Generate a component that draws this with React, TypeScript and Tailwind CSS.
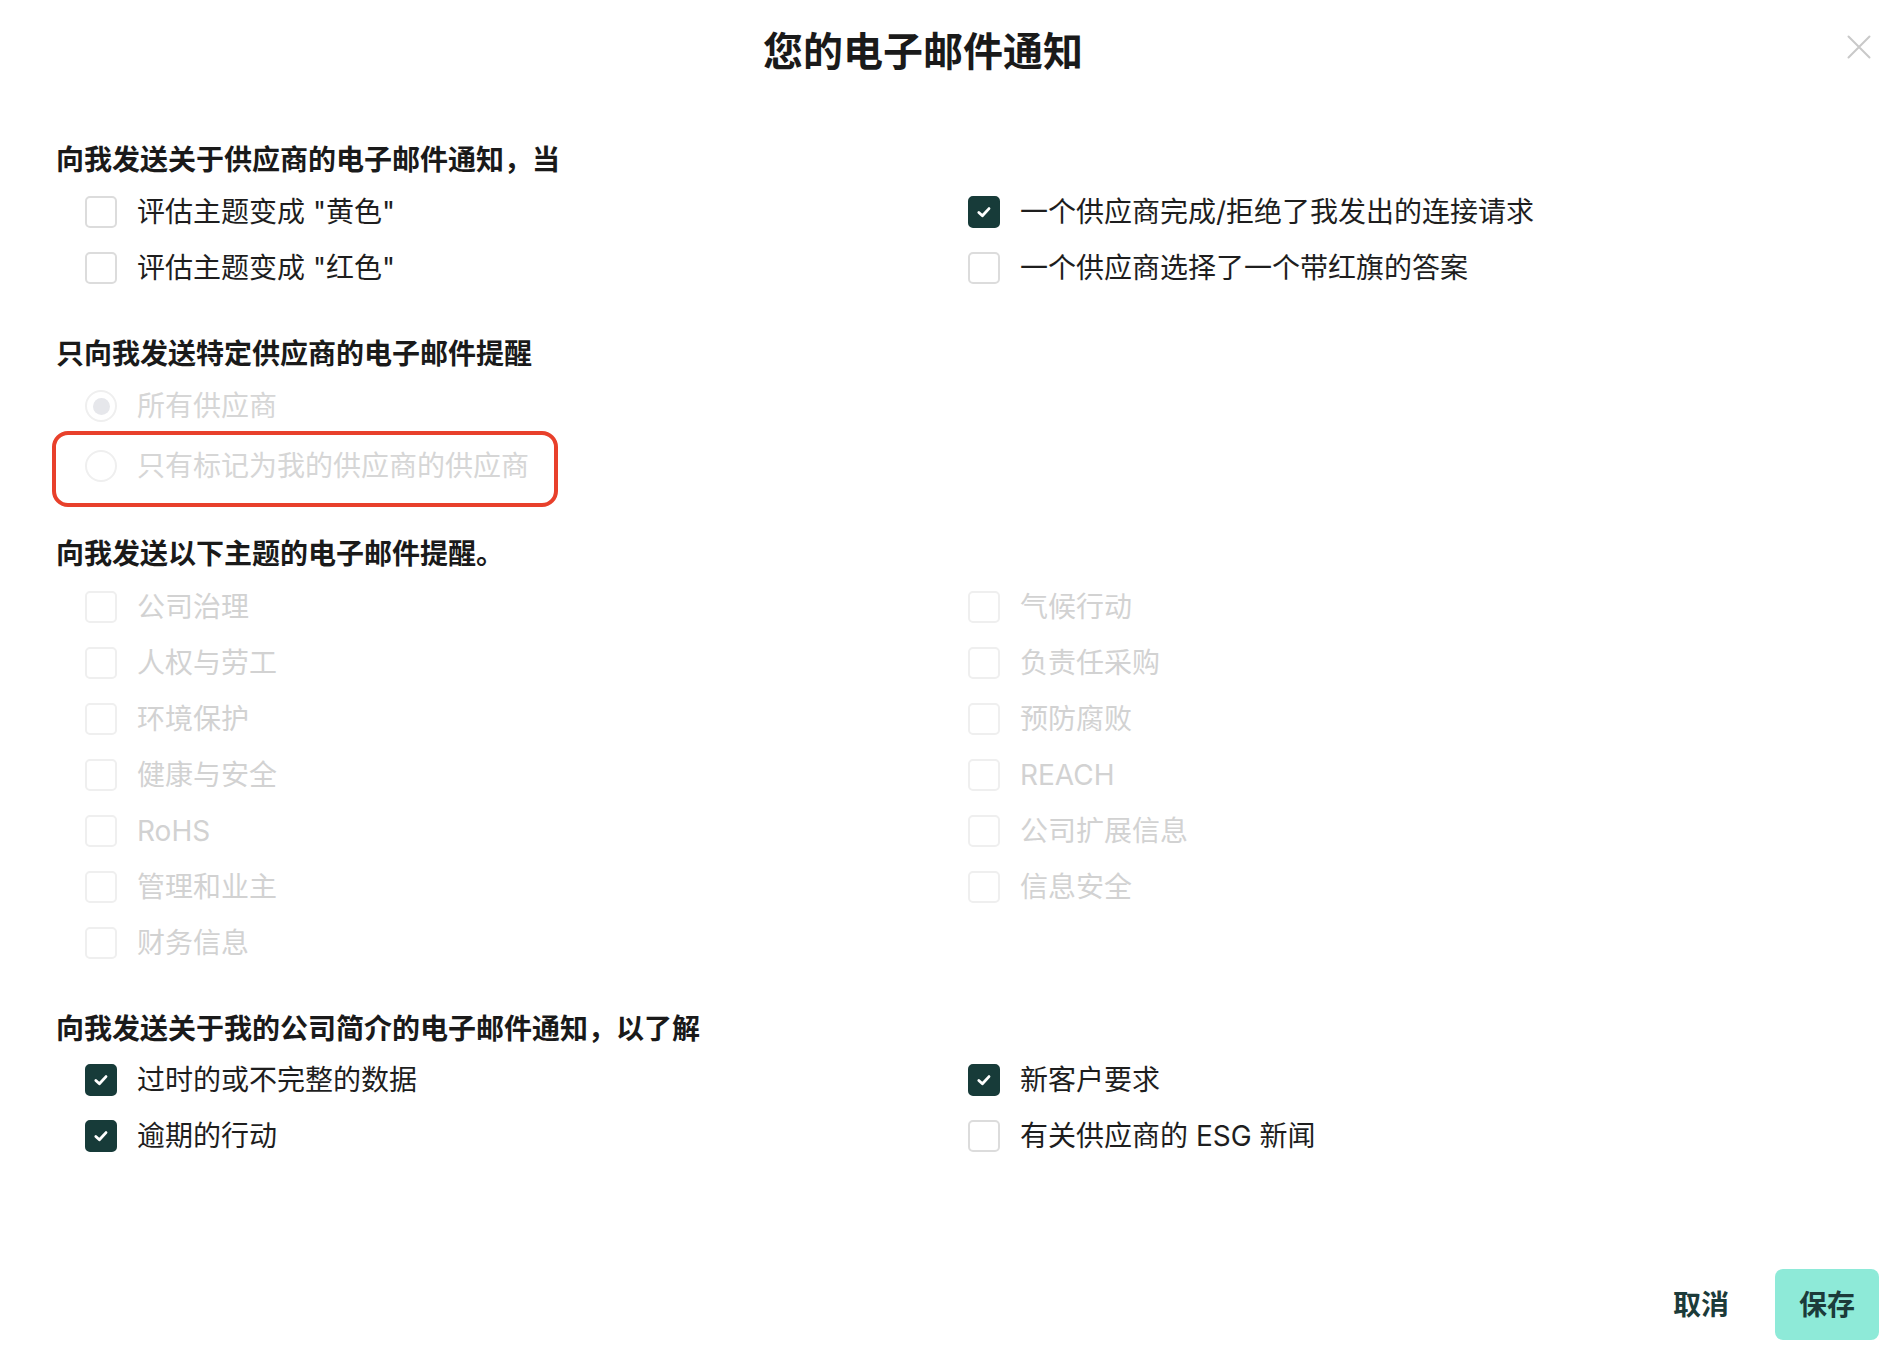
import React from "react";

type Item = { label: string; checked?: boolean; disabled?: boolean };

function CheckIcon() {
  return (
    <svg width="20" height="20" viewBox="0 0 20 20" fill="none">
      <path d="M4.8 10.4 L8.4 13.8 L15 6.6" stroke="#ffffff" strokeWidth="2.8" strokeLinecap="round" strokeLinejoin="round" />
    </svg>
  );
}

function CheckRow({ item }: { item: Item }) {
  const box = item.checked
    ? "bg-[#173b39] border-2 border-[#173b39]"
    : item.disabled
    ? "bg-white border-2 border-[#efefef]"
    : "bg-white border-2 border-[#dcdcdc]";
  return (
    <div className="flex h-[56px] items-center gap-[20px]">
      <div className={`flex h-[32px] w-[32px] shrink-0 items-center justify-center rounded-[5px] ${box}`}>
        {item.checked ? <CheckIcon /> : null}
      </div>
      <span
        className={`whitespace-nowrap text-[28px] leading-[36px] ${
          item.disabled ? "text-[#d2d2d2]" : "text-[#1e1e1e]"
        }`}
      >
        {item.label}
      </span>
    </div>
  );
}

function Grid({ items }: { items: Item[] }) {
  return (
    <div className="ml-[29px] grid grid-cols-[883px_1fr]">
      {items.map((it, i) => (
        <CheckRow key={i} item={it} />
      ))}
    </div>
  );
}

function Heading({ children, className = "" }: { children: React.ReactNode; className?: string }) {
  return (
    <h2 className={`text-[28px] font-bold leading-[36px] text-[#1a1a1a] ${className}`}>{children}</h2>
  );
}

function RadioRow({ label, selected }: { label: string; selected?: boolean }) {
  return (
    <div className="flex h-[60px] items-center gap-[20px] pl-[29px]">
      <div className="flex h-[32px] w-[32px] shrink-0 items-center justify-center rounded-full border-2 border-[#efefef] bg-white">
        {selected ? <div className="h-[17px] w-[17px] rounded-full bg-[#e6e7eb]" /> : null}
      </div>
      <span className="whitespace-nowrap text-[28px] leading-[36px] text-[#d6d6d6]">{label}</span>
    </div>
  );
}

export default function App() {
  const section1: Item[] = [
    { label: '评估主题变成 "黄色"' },
    { label: "一个供应商完成/拒绝了我发出的连接请求", checked: true },
    { label: '评估主题变成 "红色"' },
    { label: "一个供应商选择了一个带红旗的答案" },
  ];
  const topics: Item[] = [
    "公司治理",
    "气候行动",
    "人权与劳工",
    "负责任采购",
    "环境保护",
    "预防腐败",
    "健康与安全",
    "REACH",
    "RoHS",
    "公司扩展信息",
    "管理和业主",
    "信息安全",
    "财务信息",
  ].map((l) => ({ label: l, disabled: true }));
  const section4: Item[] = [
    { label: "过时的或不完整的数据", checked: true },
    { label: "新客户要求", checked: true },
    { label: "逾期的行动", checked: true },
    { label: "有关供应商的 ESG 新闻" },
  ];

  return (
    <div className="relative flex h-[1352px] w-full flex-col bg-white px-[56px] font-['Inter','Noto_Sans_CJK_SC',sans-serif] text-[#1e1e1e]">
      <button className="absolute right-[31px] top-[35px] flex h-[24px] w-[24px] items-center justify-center" aria-label="close">
        <svg width="24" height="24" viewBox="0 0 24 24" fill="none">
          <path d="M1.5 1.5 L22.5 22.5 M22.5 1.5 L1.5 22.5" stroke="#c9c9c9" strokeWidth="2" strokeLinecap="round" />
        </svg>
      </button>

      <div className="pr-[56px] pt-[28px]">
        <h1 className="text-center text-[40px] font-bold leading-[48px] text-[#1a1a1a]">您的电子邮件通知</h1>
      </div>

      <Heading className="mt-[66px]">向我发送关于供应商的电子邮件通知，当</Heading>
      <div className="mt-[6px]">
        <Grid items={section1} />
      </div>

      <Heading className="mt-[40px]">只向我发送特定供应商的电子邮件提醒</Heading>
      <div className="relative mt-[4px]">
        <RadioRow label="所有供应商" selected />
        <RadioRow label="只有标记为我的供应商的供应商" />
        <div className="pointer-events-none absolute left-[-4px] top-[55px] h-[76px] w-[506px] rounded-[16px] border-[4px] border-[#e8402b]" />
      </div>

      <Heading className="mt-[40px]">向我发送以下主题的电子邮件提醒。</Heading>
      <div className="mt-[7px]">
        <Grid items={topics} />
      </div>

      <Heading className="mt-[40px]">向我发送关于我的公司简介的电子邮件通知，以了解</Heading>
      <div className="mt-[5px]">
        <Grid items={section4} />
      </div>

      <div className="mt-auto -mr-[33px] flex items-center justify-end gap-[22px] pb-[12px]">
        <button className="flex h-[71px] items-center px-[24px] text-[28px] font-semibold text-[#1c3b3a]">取消</button>
        <button className="flex h-[71px] items-center rounded-[8px] bg-[#8eead8] px-[24px] text-[28px] font-semibold text-[#1c3b3a]">
          保存
        </button>
      </div>
    </div>
  );
}
